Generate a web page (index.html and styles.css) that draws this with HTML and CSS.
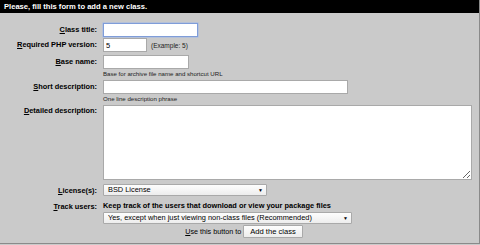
FILE: index.html
```html
<!DOCTYPE html>
<html>
<head>
<meta charset="utf-8">
<link rel="stylesheet" href="styles.css">
</head>
<body>
<div class="panel">
  <div class="header">Please, fill this form to add a new class.</div>
  <form class="form">
    <div class="row r-title">
      <label class="label"><u>C</u>lass title:</label>
      <div class="field"><input class="input focus w-title" type="text"></div>
    </div>
    <div class="row r-php">
      <label class="label"><u>R</u>equired PHP version:</label>
      <div class="field inline"><input class="input w-php" type="text" value="5"><span class="note">(Example: 5)</span></div>
    </div>
    <div class="row r-base">
      <label class="label"><u>B</u>ase name:</label>
      <div class="field"><input class="input w-base" type="text"><div class="hint">Base for archive file name and shortcut URL</div></div>
    </div>
    <div class="row r-short">
      <label class="label"><u>S</u>hort description:</label>
      <div class="field"><input class="input w-short" type="text"><div class="hint">One line description phrase</div></div>
    </div>
    <div class="row r-detail">
      <label class="label top"><u>D</u>etailed description:</label>
      <div class="field"><textarea class="textarea"></textarea></div>
    </div>
    <div class="row r-license">
      <label class="label"><u>L</u>icense(s):</label>
      <div class="field"><div class="select w-license"><span>BSD License</span><span class="arrow">▼</span></div></div>
    </div>
    <div class="row r-track">
      <label class="label top"><u>T</u>rack users:</label>
      <div class="field">
        <div class="track-text">Keep track of the users that download or view your package files</div>
        <div class="select w-track"><span>Yes, except when just viewing non-class files (Recommended)</span><span class="arrow">▼</span></div>
      </div>
    </div>
    <div class="submit-row">
      <span class="submit-text"><u>U</u>se this button to</span>
      <button class="button" type="button">Add the class</button>
    </div>
  </form>
</div>
</body>
</html>
```
FILE: styles.css
```css
html, body {
  margin: 0;
  padding: 0;
  background: #cacaca;
}
body {
  font-family: "Liberation Sans", Arial, sans-serif;
  color: #000;
}
.panel {
  width: 479px;
  height: 243px;
  border-right: 1px solid #8a8a8a;
  border-bottom: 1px solid #8a8a8a;
  background: #cacaca;
  display: flex;
  flex-direction: column;
}
.header {
  background: #000;
  color: #fff;
  font-weight: bold;
  font-size: 7.6px;
  height: 13px;
  line-height: 13px;
  padding-left: 4px;
}
.form {
  display: flex;
  flex-direction: column;
  padding-top: 10px;
}
.row {
  display: grid;
  grid-template-columns: 97px 1fr;
  column-gap: 6px;
  align-items: start;
}
.label {
  text-align: right;
  font-weight: bold;
  font-size: 7.4px;
  line-height: 14px;
  white-space: nowrap;
}
.label.top {
  line-height: 10px;
  padding-top: 1px;
}
.field {
  display: flex;
  flex-direction: column;
  align-items: flex-start;
}
.field.inline {
  flex-direction: row;
  align-items: center;
}
.input {
  box-sizing: border-box;
  height: 14px;
  border: 1px solid #a9a9a9;
  background: #fff;
  font-family: "Liberation Sans", Arial, sans-serif;
  font-size: 7.5px;
  padding: 0 2px;
  margin: 0;
  outline: none;
}
.input.focus {
  border: 1px solid #7f9dd9;
  box-shadow: 0 0 0 0.5px #9fb8e8;
}
.w-title { width: 95px; }
.w-php { width: 44px; }
.w-base { width: 86px; }
.w-short { width: 245px; }
.note {
  font-size: 6.5px;
  color: #222;
  margin-left: 4px;
}
.hint {
  font-size: 6.1px;
  color: #222;
  line-height: 8px;
  margin-top: 1px;
}
.r-title { margin-bottom: 1px; }
.r-php { margin-bottom: 3px; }
.r-base { margin-bottom: 2px; }
.r-short { margin-bottom: 2px; }
.r-detail { margin-bottom: 4px; }
.textarea {
  box-sizing: border-box;
  width: 369px;
  height: 75px;
  border: 1px solid #a9a9a9;
  background: #fff;
  margin: 0;
  padding: 0;
  resize: both;
}
.select {
  box-sizing: border-box;
  height: 12px;
  border: 1px solid #a9a9a9;
  border-radius: 1px;
  background: linear-gradient(#fdfdfd, #ededed);
  font-size: 7.4px;
  line-height: 10px;
  display: flex;
  justify-content: space-between;
  align-items: center;
  padding: 0 3px 0 4px;
  white-space: nowrap;
}
.arrow {
  font-size: 5px;
}
.w-license { width: 164px; }
.w-track { width: 249px; }
.r-license { margin-bottom: 3px; }
.track-text {
  font-weight: bold;
  font-size: 7.4px;
  line-height: 10px;
  margin-bottom: 1px;
}
.submit-row {
  display: flex;
  justify-content: center;
  align-items: center;
  gap: 2px;
  margin-top: 1px;
  padding-left: 9px;
}
.submit-text {
  font-size: 7.2px;
}
.button {
  box-sizing: border-box;
  height: 13px;
  padding: 0 6px;
  border: 1px solid #a9a9a9;
  border-radius: 1px;
  background: linear-gradient(#fdfdfd, #ededed);
  font-family: "Liberation Sans", Arial, sans-serif;
  font-size: 7.6px;
  color: #000;
}
```
